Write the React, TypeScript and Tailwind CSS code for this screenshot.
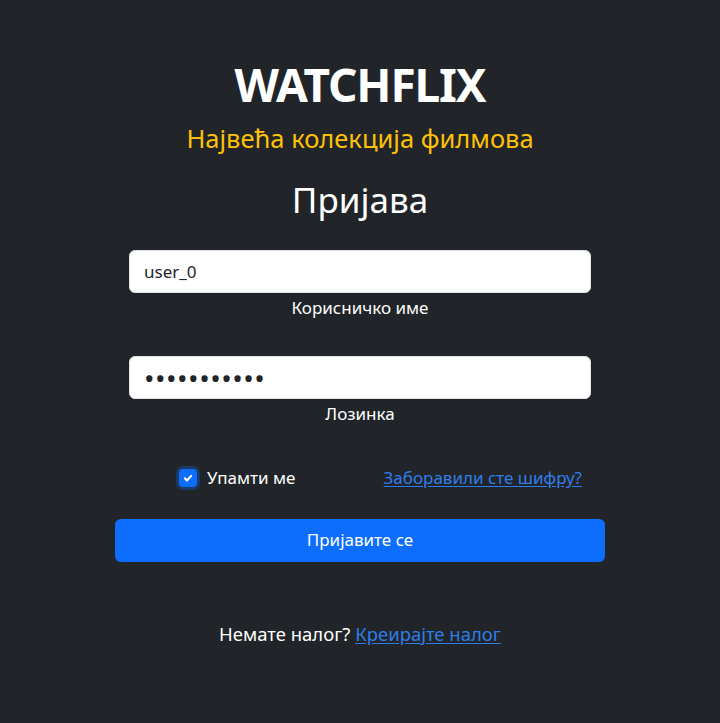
import { useState } from 'react';

export default function App() {
  const [username, setUsername] = useState('user_0');
  const [password, setPassword] = useState('lozinka1234');
  const [remember, setRemember] = useState(true);

  return (
    <div className="min-h-screen bg-[#212529] text-white font-['Noto_Sans','Liberation_Sans',sans-serif]">
      <div className="mx-auto flex w-[490px] flex-col items-center pt-[54px]">
        <h1 className="text-[46px] font-bold leading-[60px] tracking-tight">WATCHFLIX</h1>
        <p className="mt-[8px] text-[25.5px] leading-[32px] text-[#ffc107]">Највећа колекција филмова</p>
        <h2 className="mt-[24px] text-[35px] leading-[44px]">Пријава</h2>

        <div className="mt-[28px] flex w-[462px] flex-col items-center">
          <input
            value={username}
            onChange={e => setUsername(e.target.value)}
            className="h-[43px] w-full rounded-md border border-[#dee2e6] bg-white px-[14px] text-[17px] text-[#212529] outline-none"
          />
          <label className="mt-[3px] text-[17px] leading-[24px]">Корисничко име</label>
        </div>

        <div className="mt-[36px] flex w-[462px] flex-col items-center">
          <input
            type="password"
            value={password}
            onChange={e => setPassword(e.target.value)}
            className="h-[43px] w-full rounded-md border border-[#dee2e6] bg-white px-[14px] text-[28px] tracking-[0.5px] text-[#212529] outline-none"
          />
          <label className="mt-[3px] text-[17px] leading-[24px]">Лозинка</label>
        </div>

        <div className="mt-[39px] flex w-full items-center justify-between pl-[64px] pr-[23px]">
          <label className="flex items-center gap-[10px] text-[17px]">
            <span
              onClick={() => setRemember(!remember)}
              className="flex h-[18px] w-[18px] items-center justify-center rounded-[4px] bg-[#0d6efd] ring-[3px] ring-[#0d6efd]/30"
            >
              {remember && (
                <svg width="14" height="14" viewBox="0 0 20 20" fill="none">
                  <path d="M5.5 10.5l3 3 6-6.5" stroke="#fff" strokeWidth="3" strokeLinecap="round" strokeLinejoin="round" />
                </svg>
              )}
            </span>
            Упамти ме
          </label>
          <a href="#" className="text-[17px] text-[#2f7de8] underline underline-offset-2">Заборавили сте шифру?</a>
        </div>

        <button className="mt-[28px] h-[43px] w-full rounded-md bg-[#0d6efd] text-[17px] text-white">
          Пријавите се
        </button>

        <p className="mt-[59px] text-[18.5px] leading-[26px]">
          Немате налог?{' '}
          <a href="#" className="text-[#2f7de8] underline underline-offset-2">Креирајте налог</a>
        </p>
      </div>
    </div>
  );
}
